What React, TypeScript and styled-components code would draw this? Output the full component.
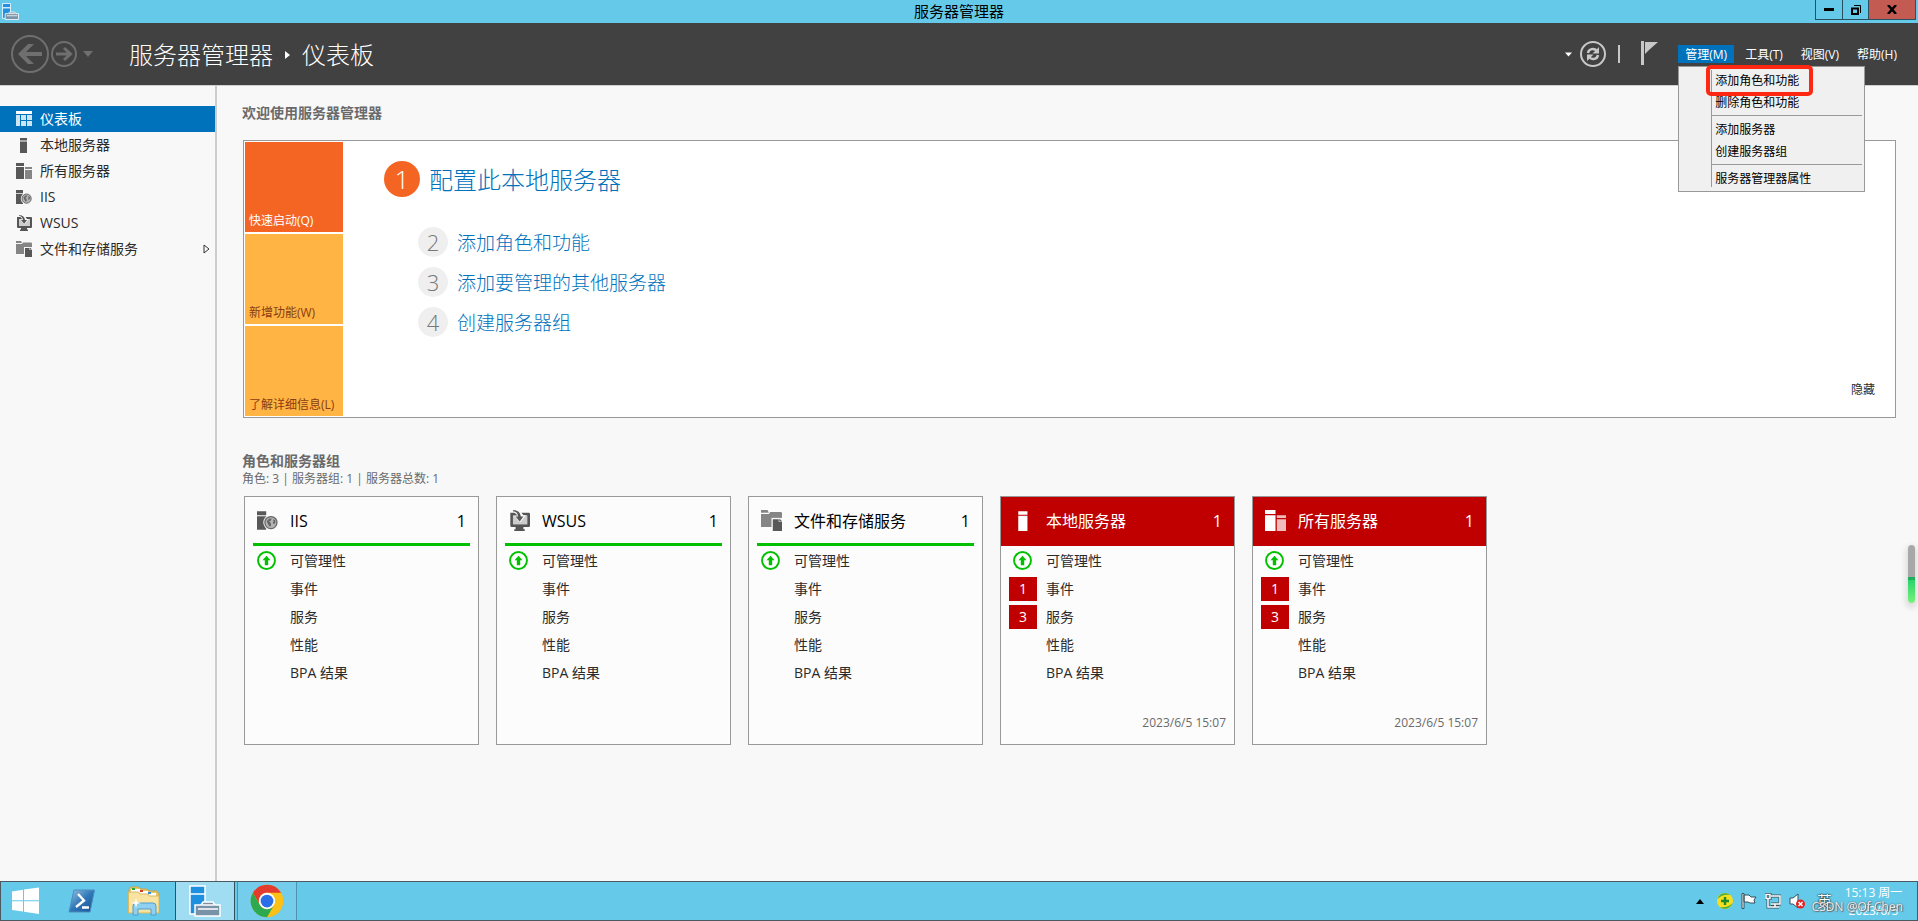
import React from "react";
import styled, { createGlobalStyle, css } from "styled-components";

const GlobalStyle = createGlobalStyle`
  *, *::before, *::after { box-sizing: border-box; }
  html, body, #root { height: 100%; margin: 0; }
  body {
    background: #f8f8f8;
    color: #2b2b2b;
    font: 14px/20px "Open Sans", "Noto Sans CJK SC", sans-serif;
    overflow: hidden;
  }
  button { font: inherit; color: inherit; background: none; border: 0; padding: 0; text-align: left; }
  a { color: inherit; text-decoration: none; }
  h1, h2, h3, p, ul, ol { margin: 0; padding: 0; font: inherit; }
  ul, ol { list-style: none; }
  svg { display: block; flex: none; }
`;

const Window = styled.div`
  display: flex;
  flex-direction: column;
  min-height: 100vh;
`;

/* ---------- Title bar ---------- */

const TitleBar = styled.header`
  display: grid;
  grid-template-columns: 1fr auto 1fr;
  align-items: start;
  height: 23px;
  padding: 0 2px;
  background: #65caea;
  color: #000;
`;

const TitleText = styled.h1`
  font-size: 15px;
  line-height: 23px;
`;

const WindowButtons = styled.div`
  display: flex;
  justify-self: end;
`;

const WindowButton = styled.button<{ $width: number; $close?: boolean }>`
  display: flex;
  align-items: center;
  justify-content: center;
  width: ${(p) => p.$width}px;
  height: 20px;
  border: 1px solid #28505e;
  border-top: 0;
  background: ${(p) => (p.$close ? "#c35b52" : "transparent")};
  & + & { border-left: 0; }
`;

const AppIconBox = styled.div`
  padding-top: 3px;
`;

/* ---------- Command bar ---------- */

const CommandBar = styled.div`
  display: flex;
  align-items: center;
  height: 63px;
  padding: 0 14px 0 11px;
  background: #414141;
  color: #fff;
  border-bottom: 1px solid #d0d0d0;
`;

const NavButtons = styled.div`
  display: flex;
  align-items: center;
  gap: 2px;
  width: 118px;
`;

const HistoryButton = styled.button`
  margin-left: 4px;
`;

const Breadcrumb = styled.nav`
  display: flex;
  align-items: center;
  flex: 1;
  gap: 12px;
  padding-top: 2px;
  font-size: 24px;
  line-height: 32px;
  font-weight: 300;
`;

const Tools = styled.div`
  display: flex;
  align-items: center;
  gap: 8px;
  margin-right: 20px;
`;

const Divider = styled.span`
  width: 2px;
  height: 18px;
  margin: 0 13px 0 4px;
  background: #c8c8c8;
`;

const MenuBar = styled.nav`
  position: relative;
  display: flex;
  gap: 4px;
`;

const MenuButton = styled.button<{ $open?: boolean }>`
  height: 18px;
  padding: 2px 7px 0;
  font-size: 12px;
  line-height: 16px;
  white-space: nowrap;
  background: ${(p) => (p.$open ? "#0072bc" : "transparent")};
`;

const DropDown = styled.div`
  position: absolute;
  z-index: 2;
  top: 21px;
  left: 0;
  width: 187px;
  padding: 3px 2px 4px 32px;
  background: #f0f0f0;
  border: 1px solid #999;
  color: #000;
`;

const DropGroup = styled.ul`
  padding-bottom: 1px;
  border-left: 1px solid #999;
  & + & {
    padding-top: 3px;
    border-top: 1px solid #999;
  }
  &:last-child {
    height: 23px;
    padding-bottom: 0;
  }
`;

const DropItem = styled.button<{ $marked?: boolean }>`
  position: relative;
  display: block;
  width: 100%;
  padding-left: 3px;
  font-size: 12px;
  line-height: 22px;
  ${(p) =>
    p.$marked &&
    css`
      &::after {
        content: "";
        position: absolute;
        top: -5px;
        left: -6px;
        width: 107px;
        height: 31px;
        border: 4px solid #fe2712;
        border-radius: 5px;
      }
    `}
`;

/* ---------- Body ---------- */

const Body = styled.div`
  display: flex;
  flex: 1;
`;

const Sidebar = styled.nav`
  flex: none;
  width: 217px;
  padding-top: 20px;
  border-right: 2px solid #ccc;
`;

const SideLink = styled.a<{ $active?: boolean }>`
  display: flex;
  align-items: center;
  gap: 8px;
  height: 26px;
  padding: 0 5px 0 16px;
  color: ${(p) => (p.$active ? "#fff" : "#2b2b2b")};
  background: ${(p) => (p.$active ? "#0072bc" : "transparent")};
  > span { flex: 1; }
`;

const Main = styled.main`
  flex: 1;
  min-width: 0;
  padding: 17px 22px 0 25px;
`;

const SectionTitle = styled.h2`
  color: #6a6a6a;
  font-weight: 700;
  line-height: 20px;
`;

const Summary = styled.p`
  color: #6a6a6a;
  font-size: 12px;
  line-height: 16px;
`;

const Welcome = styled.section`
  display: flex;
  margin: 17px 0 33px 1px;
  padding: 1px;
  background: #fff;
  border: 1px solid #999;
`;

const Tiles = styled.div`
  display: flex;
  flex-direction: column;
  gap: 2px;
`;

const Tile = styled.button<{ $active?: boolean }>`
  display: flex;
  align-items: flex-end;
  width: 98px;
  height: 90px;
  padding: 0 4px 2px;
  font-size: 12px;
  line-height: 18px;
  white-space: nowrap;
  color: ${(p) => (p.$active ? "#fff" : "#8a3c11")};
  background: ${(p) => (p.$active ? "#f46523" : "#ffb444")};
`;

const Steps = styled.ol`
  display: flex;
  flex-direction: column;
  flex: 1;
  gap: 10px;
  padding: 19px 0 0 41px;
`;

const Step = styled.li<{ $primary?: boolean }>`
  display: flex;
  align-items: center;
  gap: 9px;
  color: #0072bc;
  font-weight: 300;
  font-size: ${(p) => (p.$primary ? 24 : 19)}px;
  line-height: 30px;
  margin: ${(p) => (p.$primary ? "0 0 20px" : "0 0 0 34px")};
  > a { padding-top: 1px; margin-bottom: -1px; }
`;

const StepNumber = styled.span<{ $primary?: boolean }>`
  width: ${(p) => (p.$primary ? 36 : 30)}px;
  font-size: ${(p) => (p.$primary ? 26 : 22)}px;
  line-height: ${(p) => (p.$primary ? 36 : 30)}px;
  border-radius: 50%;
  text-align: center;
  color: ${(p) => (p.$primary ? "#fff" : "#777")};
  background: ${(p) => (p.$primary ? "#f46523" : "#efefef")};
`;

const HideButton = styled.button`
  align-self: flex-end;
  margin: 0 19px 17px 0;
  font-size: 12px;
  line-height: 18px;
`;

const Cards = styled.div`
  display: flex;
  flex-wrap: wrap;
  gap: 17px;
  margin: 9px 0 0 2px;
`;

const Card = styled.article`
  display: flex;
  flex-direction: column;
  width: 235px;
  height: 249px;
  border: 1px solid #999;
  background: #fcfcfc;
`;

const CardHeader = styled.header<{ $alert?: boolean }>`
  display: flex;
  align-items: center;
  height: 49px;
  font-size: 16px;
  line-height: 24px;
  ${(p) =>
    p.$alert
      ? css`
          padding: 0 12px 2px;
          color: #fff;
          background: #c00000;
        `
      : css`
          margin: 0 8px;
          padding: 1px 4px 0;
          color: #000;
          border-bottom: 3px solid #00c000;
        `}
  > h3 { flex: 1; margin-left: 12px; }
`;

const StatusList = styled.ul`
  flex: 1;
  padding: 1px 8px 0;
`;

const StatusRow = styled.li`
  display: grid;
  grid-template-columns: 28px 1fr;
  align-items: center;
  gap: 9px;
  height: 28px;
`;

const Badge = styled.span`
  line-height: 24px;
  text-align: center;
  color: #fff;
  background: #c00000;
`;

const StatusIcon = styled.span`
  padding: 0 0 1px 4px;
`;

const Stamp = styled.time`
  align-self: flex-end;
  padding: 0 8px 12px;
  color: #6a6a6a;
  font-size: 12px;
  line-height: 18px;
`;

const FloatGauge = styled.div`
  position: fixed;
  top: 545px;
  right: 3px;
  width: 7px;
  height: 58px;
  border-radius: 4px;
  background: linear-gradient(#a8a8a8 0 32px, #1fae5a 32px 35px, #2bd36a 35px, #78f27c 58px);
  box-shadow: 0 3px 6px 2px rgba(0, 0, 0, 0.12);
`;

/* ---------- Task bar ---------- */

const TaskBar = styled.footer`
  display: flex;
  height: 40px;
  border: 1px solid #4a5a60;
  background: #65caea;
`;

const TaskButton = styled.button<{ $width?: number; $state?: "active" | "running" }>`
  display: flex;
  align-items: center;
  justify-content: center;
  width: ${(p) => p.$width ?? 60}px;
  ${(p) =>
    p.$state &&
    css`
      border: 1px solid ${p.$state === "active" ? "#33505c" : "#4c93ab"};
      border-top: 0;
      border-bottom: 0;
      margin-right: 2px;
      background: ${p.$state === "active" ? "#a0dcf2" : "#74cdea"};
    `}
`;

const Tray = styled.div`
  display: flex;
  align-items: center;
  gap: 8px;
  margin-left: auto;
  padding-right: 13px;
  color: #fff;
`;

const TrayToggle = styled.button`
  margin-right: 5px;
`;

const InputMode = styled.span`
  margin-left: 4px;
  font-size: 15px;
  color: #fff;
  text-shadow: 0 0 1px #000, 0 0 2px #000;
`;

const Clock = styled.time`
  width: 61px;
  margin-left: 3px;
  padding-top: 1px;
  font-size: 12px;
  line-height: 18px;
  text-align: center;
  white-space: nowrap;
`;

const Watermark = styled.span`
  position: fixed;
  right: 15px;
  bottom: 5px;
  font-size: 12px;
  line-height: 18px;
  color: #e8e8e8;
  text-shadow: 0 0 2px #555, 1px 1px 1px #777;
`;

/* ---------- Drawings ---------- */

type IconName = "dashboard" | "server" | "servers" | "iis" | "wsus" | "files";

function Icon({ name, size = 16, light = false }: { name: IconName; size?: number; light?: boolean }) {
  const dark = light ? "#fff" : "#585858";
  const soft = light ? "#f0bcbc" : "#858585";
  const back = light ? "#c00000" : "#f8f8f8";
  return (
    <svg width={size} height={size} viewBox="0 0 16 16" aria-hidden="true">
      {name === "dashboard" && (
        <>
          <path fill="#fff" d="M0 0h16v3H0z" />
          <path fill="#cfe4f3" d="M0 4h4v11H0zM5 4h5v5H5zM11 4h5v5h-5zM5 10h5v5H5zM11 10h5v5h-5z" />
        </>
      )}
      {name === "server" && <path fill={dark} d="M4 1h7v2.600H4zM4 4.400h7V16H4z" />}
      {name === "servers" && (
        <>
          <path fill={dark} d="M0 0h8v3H0zM0 4h8v12H0z" />
          <path fill={soft} d="M9 4h7v2H9zM9 7h7v9H9z" />
        </>
      )}
      {name === "iis" && (
        <>
          <path fill={dark} d="M0 1h7v3H0zM0 4.700h7V15H0z" />
          <circle cx="10.600" cy="9.600" r="5.800" fill={back} />
          <circle cx="10.600" cy="9.600" r="4.600" fill="#b4b4b4" stroke="#686868" strokeWidth="1" />
          <path fill="#666" d="M7.400 8.600l2-2.200 1.800.2-.6 1.400-1.400.8 1.200 1 .4 1.600-.8 1.400-1.200-1.200zM12.200 7l1.600.8.2 1.600-1 1.600-1-1.200.6-1z" />
        </>
      )}
      {name === "wsus" && (
        <>
          <path fill="#555" d="M1 2h14a1 1 0 0 1 1 1v9a1 1 0 0 1-1 1h-4v1.600h1V16H4v-1.400h1V13H2a1 1 0 0 1-1-1z" />
          <path fill="#ccc" d="M3 4h11v7H3z" />
          <path fill={back} d="M2 0h6l3 4h2l-4.500 5.500L4 4.500h3z" />
          <path fill="#555" d="M3 .200c3-.400 5.600 1.200 6 4.800h2L8.200 8.800 5 5h2C6.800 2.600 5.600 1.200 3 1z" />
        </>
      )}
      {name === "files" && (
        <>
          <path fill="#858585" d="M0 0h5l1 2H0zM0 3h6l1-1.500h8a1 1 0 0 1 1 1V13H0z" />
          <path fill={back} d="M8 6h8v10H8z" />
          <path fill="#585858" d="M9 7h4.500v2H16v7H9zM14 6.500L16 8.500h-2z" />
        </>
      )}
    </svg>
  );
}

const ServerManagerIcon = ({ size }: { size: number }) => (
  <svg width={size} height={size} viewBox="0 0 32 32" aria-hidden="true">
    <path fill="#1f8fe0" stroke="#fff" strokeWidth="1.500" d="M1 1h15v8H1zM1 9h15v20H1z" />
    <path fill="#7893a8" stroke="#fff" strokeWidth="1.500" d="M6 20h6l2-3h10l2 3h5v11H6z" />
    <path fill="none" stroke="#fff" strokeWidth="1.500" d="M13 20h12M9 24h20" />
  </svg>
);

const BackIcon = () => (
  <svg width="38" height="38" viewBox="0 0 38 38" fill="none" stroke="#6f6f6f" aria-hidden="true">
    <circle cx="19" cy="19" r="18" strokeWidth="2" />
    <path strokeWidth="4" d="M31 19H10" />
    <path fill="#6f6f6f" stroke="none" d="M17 9h6L13 19l10 10h-6L7 19z" />
  </svg>
);

const ForwardIcon = () => (
  <svg width="26" height="26" viewBox="0 0 26 26" fill="none" stroke="#6f6f6f" aria-hidden="true">
    <circle cx="13" cy="13" r="12" strokeWidth="2" />
    <path strokeWidth="3" d="M5 13h14M13 7l6.500 6-6.500 6" />
  </svg>
);

const RefreshIcon = () => (
  <svg width="26" height="26" viewBox="0 0 26 26" fill="none" stroke="#c8c8c8" aria-hidden="true">
    <circle cx="13" cy="13" r="12" strokeWidth="2" />
    <path strokeWidth="2.400" d="M8 12c.5-4 6-5.500 9-2M18 14c-.5 4-6 5.500-9 2" />
    <path fill="#c8c8c8" stroke="none" d="M19 6v6.500h-6.500zM7 20v-6.500h6.500z" />
  </svg>
);

const FlagIcon = () => (
  <svg width="17" height="26" viewBox="0 0 17 26" aria-hidden="true">
    <path fill="#c8c8c8" d="M0 0h3v24H0zM4 1h13L8 9l-4 4z" />
  </svg>
);

const UpIcon = () => (
  <svg width="19" height="19" viewBox="0 0 20 20" aria-label="正常">
    <circle cx="10" cy="10" r="8.900" fill="#fff" stroke="#00c000" strokeWidth="2" />
    <path fill="#00c000" d="M10 5l4.200 4.700h-2.400V15H8.200V9.700H5.800z" />
  </svg>
);

const StartIcon = () => (
  <svg width="28" height="28" viewBox="0 0 28 28" fill="#fff" aria-hidden="true">
    <path d="M0 4.500l11-1.700v10.400H0zM12 2.600L27 .500v12.700H12zM0 14.200h11v10.300L0 23zM12 14.200h15V27l-15-2.200z" />
  </svg>
);

const PowerShellIcon = () => (
  <svg width="28" height="24" viewBox="0 0 28 24" aria-hidden="true">
    <defs>
      <linearGradient id="ps" x1="0" y1="0" x2="1" y2="1">
        <stop offset="0" stopColor="#9cc4e4" />
        <stop offset="0.500" stopColor="#2f78b8" />
        <stop offset="1" stopColor="#1b4f8f" />
      </linearGradient>
    </defs>
    <path fill="url(#ps)" stroke="#4a8cc0" d="M6 1h20.500L22 23H1z" />
    <path fill="none" stroke="#fff" strokeWidth="2.400" d="M10 5l6 6.500L8 18M14 18.500h7" />
  </svg>
);

const ExplorerIcon = () => (
  <svg width="34" height="30" viewBox="0 0 34 30" aria-hidden="true">
    <path fill="#e6c66a" stroke="#c9a548" d="M2 3l2-2h8l2 2h6l2 2h8l2 3v18H2z" />
    <path fill="#fff" d="M4 3h9v3H4zM12 5h9v3h-9zM20 7h9v3h-9z" />
    <path fill="#22a83a" d="M5 2h3v2H5z" />
    <path fill="#d83a2c" d="M13 4h3v2h-3z" />
    <path fill="#2d8fe0" d="M21 6h3v2h-3z" />
    <path fill="#f8e3a0" stroke="#d9b860" d="M1.500 6h10l1.500 2h8l1 2h10v17h-30.500z" />
    <path fill="#8fd0f0" stroke="#4f9fd0" d="M6 29v-9q0-3 3-3h17q3 0 3 3v9h-5v-6H11v6z" />
    <path fill="#fff" d="M9 12l1 4 4 1-4 1-1 4-1-4-4-1 4-1z" />
  </svg>
);

const ChromeIcon = () => (
  <svg width="34" height="34" viewBox="0 0 48 48" aria-hidden="true">
    <circle cx="24" cy="24" r="23" fill="#fbc116" />
    <path fill="#e33b2e" d="M4.080 12.500a23 23 0 0 1 39.840 0H24a11.500 11.500 0 0 0-9.960 17.250z" />
    <path fill="#2da94f" d="M4.080 12.500L14.040 29.750A11.500 11.500 0 0 0 33.960 29.750L24 47A23 23 0 0 1 4.080 12.500z" />
    <circle cx="24" cy="24" r="11.500" fill="#fff" />
    <circle cx="24" cy="24" r="9" fill="#2a6fe8" />
  </svg>
);

const Caret = ({ width, fill, up }: { width: number; fill: string; up?: boolean }) => (
  <svg width={width} height={Math.ceil(width / 2) + 1} viewBox="0 0 10 6" fill={fill} aria-hidden="true">
    <path d={up ? "M0 6l5-6 5 6z" : "M0 0h10L5 6z"} />
  </svg>
);

const ShieldTrayIcon = () => (
  <svg width="16" height="16" viewBox="0 0 16 16" aria-hidden="true">
    <circle cx="8" cy="8" r="8" fill="#f5df1e" />
    <path fill="#4cb03c" d="M.5 6A8 8 0 0 1 13 1.800Q5 1 .500 6zM15.500 10A8 8 0 0 1 3 14.200Q11 15 15.500 10z" />
    <path fill="#1c8a2c" d="M6.800 4h2.400v2.800H12v2.400H9.200V12H6.800V9.200H4V6.800h2.800z" />
  </svg>
);

const FlagTrayIcon = () => (
  <svg width="16" height="16" viewBox="0 0 16 16" aria-hidden="true">
    <path fill="#fff" stroke="#33505c" d="M1 .500h2v15H1zM3 2h5l2 2h5l-2 3 1 3H9L7 9H3z" />
  </svg>
);

const NetworkTrayIcon = () => (
  <svg width="16" height="16" viewBox="0 0 16 16" fill="none" aria-hidden="true">
    <path stroke="#33505c" strokeWidth="3" d="M6 3h9v8H6M1 1.500h4v4H1zM3 6v8h11M10 11v3" />
    <path stroke="#fff" strokeWidth="1.500" d="M6 3h9v8H6M1 1.500h4v4H1zM3 6v8h11M10 11v3" />
  </svg>
);

const VolumeTrayIcon = () => (
  <svg width="16" height="16" viewBox="0 0 16 16" aria-hidden="true">
    <path fill="#fff" stroke="#33505c" d="M1 5h3l5-4v14l-5-4H1z" />
    <circle cx="11.500" cy="11" r="4.500" fill="#e02424" />
    <path stroke="#fff" strokeWidth="1.500" d="M9.500 9l4 4M13.500 9l-4 4" />
  </svg>
);

/* ---------- Data ---------- */

const sideItems: { icon: IconName; label: string; more?: boolean }[] = [
  { icon: "dashboard", label: "仪表板" },
  { icon: "server", label: "本地服务器" },
  { icon: "servers", label: "所有服务器" },
  { icon: "iis", label: "IIS" },
  { icon: "wsus", label: "WSUS" },
  { icon: "files", label: "文件和存储服务", more: true },
];

const menuGroups = [["添加角色和功能", "删除角色和功能"], ["添加服务器", "创建服务器组"], ["服务器管理器属性"]];

const tiles = ["快速启动(Q)", "新增功能(W)", "了解详细信息(L)"];

const steps = ["配置此本地服务器", "添加角色和功能", "添加要管理的其他服务器", "创建服务器组"];

const statusLabels = ["可管理性", "事件", "服务", "性能", "BPA 结果"];

const cards: { icon: IconName; title: string; alert?: boolean }[] = [
  { icon: "iis", title: "IIS" },
  { icon: "wsus", title: "WSUS" },
  { icon: "files", title: "文件和存储服务" },
  { icon: "server", title: "本地服务器", alert: true },
  { icon: "servers", title: "所有服务器", alert: true },
];

const alertCounts: Record<string, number> = { 事件: 1, 服务: 3 };

function ServerCard({ icon, title, alert }: { icon: IconName; title: string; alert?: boolean }) {
  return (
    <Card>
      <CardHeader $alert={alert}>
        <Icon name={icon} size={21} light={alert} />
        <h3>{title}</h3>
        <span>1</span>
      </CardHeader>
      <StatusList>
        {statusLabels.map((label, i) => (
          <StatusRow key={label}>
            {i === 0 ? (
              <StatusIcon><UpIcon /></StatusIcon>
            ) : alert && alertCounts[label] ? (
              <Badge>{alertCounts[label]}</Badge>
            ) : (
              <span />
            )}
            <span>{label}</span>
          </StatusRow>
        ))}
      </StatusList>
      {alert && <Stamp>2023/6/5 15:07</Stamp>}
    </Card>
  );
}

export default function App() {
  return (
    <Window>
      <GlobalStyle />
      <TitleBar>
        <AppIconBox><ServerManagerIcon size={17} /></AppIconBox>
        <TitleText>服务器管理器</TitleText>
        <WindowButtons>
          <WindowButton $width={28} aria-label="最小化">
            <svg width="10" height="3"><path d="M0 0h10v3H0z" /></svg>
          </WindowButton>
          <WindowButton $width={26} aria-label="还原">
            <svg width="10" height="10" fill="none" stroke="#000">
              <path strokeWidth="2" d="M1 3.500h6V9H1z" />
              <path d="M3 .500h6.500V8" />
            </svg>
          </WindowButton>
          <WindowButton $width={47} $close aria-label="关闭">
            <svg width="10" height="9" stroke="#000" strokeWidth="2.500"><path d="M1 0l8 9M9 0L1 9" /></svg>
          </WindowButton>
        </WindowButtons>
      </TitleBar>

      <CommandBar>
        <NavButtons>
          <button aria-label="后退"><BackIcon /></button>
          <button aria-label="前进"><ForwardIcon /></button>
          <HistoryButton aria-label="历史记录"><Caret width={10} fill="#6f6f6f" /></HistoryButton>
        </NavButtons>
        <Breadcrumb>
          <span>服务器管理器</span>
          <svg width="5" height="8" fill="#fff"><path d="M0 0l5 4-5 4z" /></svg>
          <span>仪表板</span>
        </Breadcrumb>
        <Tools>
          <Caret width={7} fill="#fff" />
          <button aria-label="刷新"><RefreshIcon /></button>
          <Divider />
          <button aria-label="通知"><FlagIcon /></button>
        </Tools>
        <MenuBar>
          <MenuButton $open>管理(M)</MenuButton>
          <MenuButton>工具(T)</MenuButton>
          <MenuButton>视图(V)</MenuButton>
          <MenuButton>帮助(H)</MenuButton>
          <DropDown>
            {menuGroups.map((group, g) => (
              <DropGroup key={group[0]}>
                {group.map((item, i) => (
                  <li key={item}>
                    <DropItem $marked={g === 0 && i === 0}>{item}</DropItem>
                  </li>
                ))}
              </DropGroup>
            ))}
          </DropDown>
        </MenuBar>
      </CommandBar>

      <Body>
        <Sidebar>
          {sideItems.map((item, i) => (
            <SideLink key={item.label} href="#" $active={i === 0}>
              <Icon name={item.icon} />
              <span>{item.label}</span>
              {item.more && (
                <svg width="7" height="10" fill="none" stroke="#333"><path d="M1 1l5 4-5 4z" /></svg>
              )}
            </SideLink>
          ))}
        </Sidebar>
        <Main>
          <SectionTitle>欢迎使用服务器管理器</SectionTitle>
          <Welcome>
            <Tiles>
              {tiles.map((tile, i) => (
                <Tile key={tile} $active={i === 0}>{tile}</Tile>
              ))}
            </Tiles>
            <Steps>
              {steps.map((step, i) => (
                <Step key={step} $primary={i === 0}>
                  <StepNumber $primary={i === 0}>{i + 1}</StepNumber>
                  <a href="#">{step}</a>
                </Step>
              ))}
            </Steps>
            <HideButton>隐藏</HideButton>
          </Welcome>
          <SectionTitle>角色和服务器组</SectionTitle>
          <Summary>角色: 3 | 服务器组: 1 | 服务器总数: 1</Summary>
          <Cards>
            {cards.map((card) => (
              <ServerCard key={card.title} {...card} />
            ))}
          </Cards>
        </Main>
      </Body>

      <TaskBar>
        <TaskButton $width={50} aria-label="开始"><StartIcon /></TaskButton>
        <TaskButton $width={62} aria-label="PowerShell"><PowerShellIcon /></TaskButton>
        <TaskButton $width={62} aria-label="文件资源管理器"><ExplorerIcon /></TaskButton>
        <TaskButton $state="active" aria-label="服务器管理器"><ServerManagerIcon size={32} /></TaskButton>
        <TaskButton $state="running" aria-label="Chrome"><ChromeIcon /></TaskButton>
        <Tray>
          <TrayToggle aria-label="显示隐藏的图标"><Caret width={8} fill="#000" up /></TrayToggle>
          <ShieldTrayIcon />
          <FlagTrayIcon />
          <NetworkTrayIcon />
          <VolumeTrayIcon />
          <InputMode>英</InputMode>
          <Clock>15:13 周一<br />2023/6/5</Clock>
        </Tray>
      </TaskBar>
      <FloatGauge />
      <Watermark>CSDN @Of Chen</Watermark>
    </Window>
  );
}
